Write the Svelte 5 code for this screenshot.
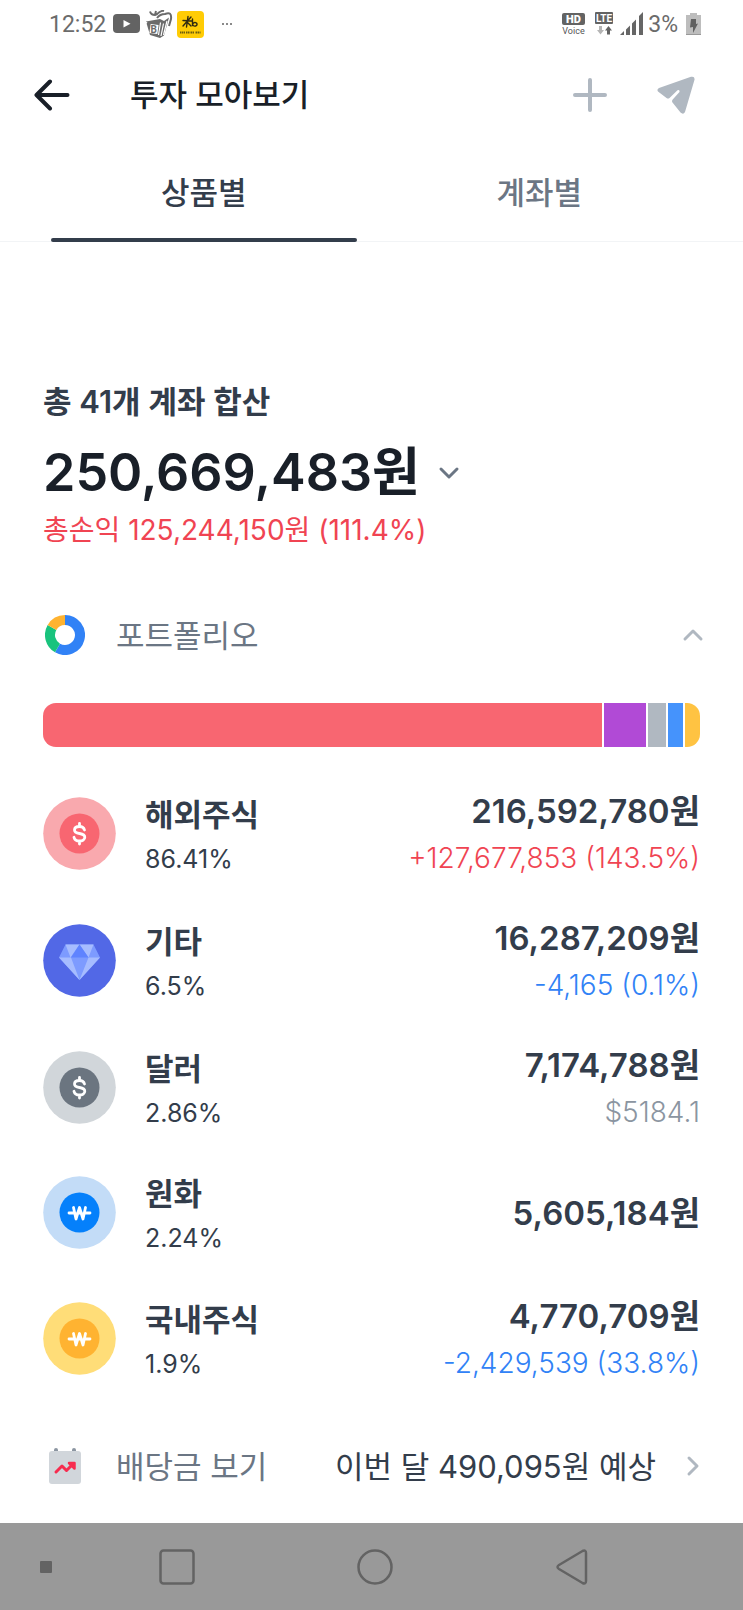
<script>
  let expanded = $state(true);
  let tab = $state('product');

  const holdings = [
    { name: '해외주식', share: 86.41, amount: '216,592,780원', note: '+127,677,853 (143.5%)', tone: 'up', icon: 'dollar', bar: '#f86671', ring: '#f9a9ae', core: '#f86671' },
    { name: '기타', share: 6.5, amount: '16,287,209원', note: '-4,165 (0.1%)', tone: 'down', icon: 'gem', bar: '#b14ad6', ring: '#5268e6', core: '#5268e6' },
    { name: '달러', share: 2.86, amount: '7,174,788원', note: '$5184.1', tone: 'muted', icon: 'dollar', bar: '#b0b8c1', ring: '#d1d6da', core: '#6b7580' },
    { name: '원화', share: 2.24, amount: '5,605,184원', note: '', tone: '', icon: 'won', bar: '#4593fc', ring: '#c3dcf7', core: '#0580fb' },
    { name: '국내주식', share: 1.9, amount: '4,770,709원', note: '-2,429,539 (33.8%)', tone: 'down', icon: 'won', bar: '#ffc342', ring: '#ffdd78', core: '#ffb331' }
  ];
</script>

<div class="screen">
  <div class="status">
    <span class="clock">12:52</span>
    <svg class="s-video" width="28" height="20" viewBox="0 0 28 20" aria-hidden="true">
      <rect width="27" height="19" rx="4" fill="#636363" />
      <path d="M10.500 6v7.500l7-3.700z" fill="#fff" />
    </svg>
    <svg class="s-box" width="28" height="28" viewBox="0 0 28 28" aria-hidden="true">
      <path d="M1 11.500 15 9l4 2 5-3.500-5 18-4 2.500-10-3z" fill="#6b6b6b" />
      <path d="M0 14.500 2 12M15.500 12.500 13.500 25M22 11l-3.500 14M18.500 13.500 16 26" stroke="#fff" stroke-width="1.200" />
      <path d="M5 1.500Q6 5 10 5l1-4M11 5q5-5 8-4M12 8q3-4 8-4 7-3 6 5l-2 7" fill="none" stroke="#6b6b6b" stroke-width="2" />
      <rect x="5" y="14.500" width="8" height="9" fill="#fff" transform="rotate(8 9 19)" />
      <text x="5.500" y="23" font-size="10" font-weight="700" fill="#6b6b6b" font-family="Roboto, sans-serif">B</text>
    </svg>
    <svg class="s-bank" width="27" height="27" viewBox="0 0 27 27" aria-hidden="true">
      <rect width="27" height="27" rx="4" fill="#ffcc05" />
      <path d="M6 9.500 15 10M11 5.500 9.500 16M14 6 6 15M9.500 10.500 14 15M15.500 8v6.500M15.500 13.500q1.500-3 4-1.500 1.500 2-1 3-2 .5-3-1.500" fill="none" stroke="#2f2a12" stroke-width="1.400" stroke-linecap="round" />
      <path d="M3 21.500h5m1 0h3.500m1 0h4m1 0h5" stroke="#6b5c0c" stroke-width="2" stroke-dasharray="1.500 .5" />
    </svg>
    <svg class="s-more" width="10" height="4" viewBox="0 0 10 4" aria-hidden="true">
      <path d="M0 2h2m2 0h2m2 0h2" stroke="#8a8a8a" stroke-width="2" />
    </svg>
    <svg class="s-hd" width="24" height="24" viewBox="0 0 24 24" aria-label="HD Voice">
      <rect x="0" y="1" width="23" height="12" rx="2" fill="#636363" />
      <text x="11.500" y="11" text-anchor="middle" font-size="11" font-weight="900" fill="#fff" font-family="Roboto, sans-serif">HD</text>
      <text x="11.500" y="22" text-anchor="middle" font-size="9" font-weight="400" fill="#555" font-family="Roboto, sans-serif">Voice</text>
    </svg>
    <svg class="s-lte" width="19" height="24" viewBox="0 0 19 24" aria-label="LTE">
      <rect x="0" y="0" width="18" height="12" rx="1" fill="#636363" />
      <text x="9" y="10" text-anchor="middle" font-size="10" font-weight="700" fill="#fff" font-family="Roboto, sans-serif">LTE</text>
      <path d="M4 14h3v4h2l-3.500 4.500L2 18h2z" fill="#b5b5b5" />
      <path d="M12 22.500v-4h-2l3.500-4.500 3.500 4.500h-2v4z" fill="#636363" />
    </svg>
    <svg class="s-signal" width="24" height="24" viewBox="0 0 24 24" aria-hidden="true">
      <path d="M0 23l4-4v4zM6 17.500l4-4V23H6zM12 11.500l4-4V23h-4zM19 4l4-4v23h-4z" fill="#666" />
    </svg>
    <span class="percent">3%</span>
    <svg class="s-battery" width="16" height="24" viewBox="0 0 16 24" aria-hidden="true">
      <path d="M4 1h7v2h4v20H0V3h4z" fill="#bdbdbd" />
      <path d="M0 22h15v1H0z" fill="#999" />
      <path d="M5 7h5v5l2-.5L7 21v-6l-3 .5z" fill="#606060" />
    </svg>
  </div>

  <header class="appbar">
    <button class="icon-btn" aria-label="뒤로">
      <svg width="36" height="32" viewBox="0 0 36 32"><path d="M33.500 16H3M16 2.500 2.500 16 16 29.500" fill="none" stroke="#191f28" stroke-width="4" stroke-linecap="round" stroke-linejoin="round" /></svg>
    </button>
    <h1>투자 모아보기</h1>
    <button class="icon-btn add" aria-label="추가">
      <svg width="36" height="36" viewBox="0 0 36 36"><path d="M18 3v30M3 18h30" stroke="#b0b8c1" stroke-width="4" stroke-linecap="round" /></svg>
    </button>
    <button class="icon-btn" aria-label="공유">
      <svg width="38" height="38" viewBox="0 0 38 38">
        <path d="M2 12 34 .8q4-.8 3.500 3L28 36q-1.600 3-4.500.5L15.500 26.500q-1-1.500.2-3L22.500 16q.4-2.300-2-1.800L12.500 22q-1.300 1-3 0L1 15.500Q-.5 13.500 2 12z" fill="#b0b8c1" />
      </svg>
    </button>
  </header>

  <nav class="tabs" aria-label="보기 방식">
    <button class:active={tab === 'product'} onclick={() => (tab = 'product')}>상품별</button>
    <button class:active={tab === 'account'} onclick={() => (tab = 'account')}>계좌별</button>
  </nav>

  <main>
    <section class="summary">
      <p class="label">총 41개 계좌 합산</p>
      <div class="total">
        <strong>250,669,483원</strong>
        <button class="icon-btn" aria-label="통화 선택">
          <svg width="22" height="14" viewBox="0 0 22 14"><path d="M3 3l8 8 8-8" fill="none" stroke="#6b7684" stroke-width="3" stroke-linecap="round" stroke-linejoin="round" /></svg>
        </button>
      </div>
      <p class="profit">총손익 125,244,150원 (111.4%)</p>
    </section>

    <button class="line-row" aria-expanded={expanded} onclick={() => (expanded = !expanded)}>
      <span class="lead">
        <svg width="40" height="40" viewBox="0 0 40 40">
          <g fill="none" stroke-width="10">
            <path d="M20 5A15 15 0 1 1 12.500 33" stroke="#3182f6" />
            <path d="M12.500 33A15 15 0 0 1 7 12.500" stroke="#19c37d" />
            <path d="M7 12.500A15 15 0 0 1 20 5" stroke="#ffb331" />
          </g>
        </svg>
      </span>
      <span class="row-title">포트폴리오</span>
      <svg class="tail" width="22" height="14" viewBox="0 0 22 14"><path d="M3 11l8-8 8 8" fill="none" stroke="#b0b8c1" stroke-width="3" stroke-linecap="round" stroke-linejoin="round" /></svg>
    </button>

    {#if expanded}
      <div class="bar">
        {#each holdings as h}
          <span style="flex-grow: {h.share}; background: {h.bar}"></span>
        {/each}
      </div>

      <ul>
        {#each holdings as h}
          <li>
            <svg class="coin" width="73" height="73" viewBox="0 0 73 73" aria-hidden="true">
              <circle cx="36.500" cy="36.500" r="36.300" fill={h.ring} />
              {#if h.icon === 'gem'}
                <path d="M22.500 20.500h28L57 33.500 36.500 56 16 33.500z" fill="#7d9bff" />
                <path d="M22.500 20.500h14l-9 13zM36.500 20.500h14l-5 13zM16 33.500h12L36.500 56zM45.500 33.500H57L36.500 56z" fill="#a6bcff" />
                <path d="M36.500 20.500l9 13h-17.500z" fill="#5f83ff" />
              {:else}
                <circle cx="36.500" cy="36.500" r="20" fill={h.core} />
                {#if h.icon === 'dollar'}
                  <path d="M41.500 33c-.6-2.300-2.500-3.500-5-3.500-3 0-5 1.400-5 3.500 0 2.300 2 3 5 3.500s5.300 1.200 5.300 3.800c0 2.200-2.300 3.700-5.300 3.700-2.800 0-4.900-1.300-5.500-3.700M36.500 26.500v3M36.500 44v3" fill="none" stroke="#fff" stroke-width="2.800" stroke-linecap="round" stroke-linejoin="round" />
                {:else}
                  <path d="M30.500 31.500l2.500 11.500 3.500-11.500L40 43l2.500-11.500M26 37h4M43 37h4M34.500 37h4" fill="none" stroke="#fff" stroke-width="2.800" stroke-linecap="round" stroke-linejoin="round" />
                {/if}
              {/if}
            </svg>
            <div class="info">
              <span class="name">{h.name}</span>
              <span class="share">{h.share}%</span>
            </div>
            <div class="value">
              <span class="amount">{h.amount}</span>
              {#if h.note}<span class="note {h.tone}">{h.note}</span>{/if}
            </div>
          </li>
        {/each}
      </ul>
    {/if}

    <button class="line-row">
      <span class="lead">
        <svg width="40" height="40" viewBox="0 0 40 40">
          <path d="M11 5v-1M29 5v-1" stroke="#8b95a1" stroke-width="4" stroke-linecap="round" />
          <rect x="4" y="5" width="32" height="33" rx="3" fill="#d1d6db" />
          <path d="M11 26l6-6 4.500 4.500 7-7" fill="none" stroke="#f72c4f" stroke-width="3" stroke-linecap="round" stroke-linejoin="round" />
          <path d="M24 17h5.500v5.500z" fill="#f72c4f" stroke="#f72c4f" stroke-width="2.500" stroke-linejoin="round" />
        </svg>
      </span>
      <span class="row-title">배당금 보기</span>
      <span class="forecast">이번 달 490,095원 예상</span>
      <svg width="14" height="22" viewBox="0 0 14 22"><path d="M3 3l8 8-8 8" fill="none" stroke="#b0b8c1" stroke-width="3" stroke-linecap="round" stroke-linejoin="round" /></svg>
    </button>
  </main>

  <nav class="system" aria-label="시스템">
    <button class="dot" aria-label="고정"><svg width="12" height="12"><rect width="12" height="12" rx="1" fill="#636363" /></svg></button>
    <button aria-label="최근 앱"><svg width="36" height="36"><rect x="1.500" y="1.500" width="33" height="33" rx="3" fill="none" stroke="#636363" stroke-width="2.500" /></svg></button>
    <button aria-label="홈"><svg width="36" height="36"><circle cx="18" cy="18" r="16.500" fill="none" stroke="#636363" stroke-width="2.500" /></svg></button>
    <button aria-label="이전"><svg width="36" height="36"><path d="M5 16 28.500 2Q32 .5 32 4v28q0 3.500-3.500 2L5 20q-3-2 0-4z" fill="none" stroke="#636363" stroke-width="2.500" /></svg></button>
  </nav>
</div>

<style>
  :global(body) { margin: 0; background: #fff; }

  .screen {
    display: flex;
    flex-direction: column;
    min-height: 100vh;
    background: #fff;
    color: #333d4b;
    font-family: Inter, "Noto Sans CJK KR", sans-serif;
  }

  button {
    border: 0;
    padding: 0;
    background: none;
    font: inherit;
    color: inherit;
    cursor: pointer;
  }
  svg { display: block; flex: none; }
  p, h1, ul { margin: 0; padding: 0; }

  .status {
    display: flex;
    align-items: center;
    height: 48px;
    padding: 0 41px 0 49px;
    font-family: Roboto, sans-serif;
    font-size: 23px;
    color: #6b6b6b;
  }
  .s-video { margin-left: 7px; }
  .s-box { margin-left: 4px; }
  .s-bank { margin-left: 4px; }
  .s-more { margin-left: 18px; }
  .s-hd { margin-left: auto; }
  .s-lte { margin-left: 9px; }
  .s-signal { margin-left: 6px; }
  .percent { margin-left: 4px; }
  .s-battery { margin-left: 8px; }

  .appbar {
    display: flex;
    align-items: center;
    height: 94px;
    padding: 0 48px 0 34px;
  }
  h1 {
    flex: 1;
    margin-left: 60px;
    padding-bottom: 5px;
    font-size: 31px;
    font-weight: 500;
    color: #191f28;
  }
  .add { margin-right: 49px; }

  .tabs {
    display: grid;
    grid-template-columns: 1fr 1fr;
    gap: 30px;
    height: 99px;
    padding: 0 51px;
    border-bottom: 1px solid #f2f4f6;
  }
  .tabs button {
    position: relative;
    padding-bottom: 2px;
    font-size: 31px;
    font-weight: 500;
    color: #6b7684;
  }
  .tabs .active { color: #333d4b; }
  .tabs .active::after {
    content: "";
    position: absolute;
    inset: auto 0 -1px;
    height: 4px;
    border-radius: 2px;
    background: #333d4b;
  }

  main { padding: 138px 43px 16px; }

  .label {
    line-height: 44px;
    font-size: 31px;
    font-weight: 600;
  }
  .total {
    display: flex;
    align-items: center;
    gap: 18px;
    margin-top: 14px;
  }
  .total strong {
    line-height: 70px;
    font-size: 52px;
    font-weight: 600;
    color: #191f28;
  }
  .profit {
    line-height: 44px;
    font-size: 28px;
    color: #f04452;
  }

  .line-row {
    display: flex;
    align-items: center;
    width: 100%;
    height: 80px;
    text-align: left;
  }
  .summary + .line-row { margin-top: 43px; }
  .lead { margin: 0 31px 0 2px; }
  .row-title, .forecast { padding-bottom: 4px; font-size: 31px; }
  .row-title { color: #6b7684; }
  .tail { margin-left: auto; margin-right: -4px; }
  .forecast {
    margin-left: auto;
    margin-right: 30px;
  }

  .bar {
    display: flex;
    gap: 2px;
    height: 44px;
    margin-top: 28px;
    border-radius: 13px;
    overflow: hidden;
  }
  .bar span { flex-basis: 0; min-width: 15px; }

  ul {
    display: grid;
    gap: 31px;
    margin: 38px 0 40px;
    list-style: none;
  }
  li {
    display: flex;
    align-items: center;
  }
  .info, .value { display: flex; flex-direction: column; }
  .info { margin-left: 29px; padding-top: 5px; }
  .value { margin-left: auto; padding-top: 2px; text-align: right; }
  .name {
    line-height: 46px;
    font-size: 31px;
    font-weight: 600;
  }
  .share { line-height: 42px; font-size: 25px; }
  .amount {
    line-height: 49px;
    font-size: 33px;
    font-weight: 600;
  }
  .note { line-height: 45px; font-size: 28px; font-weight: 300; }
  .up { color: #f04452; }
  .down { color: #3182f6; }
  .muted { color: #8b95a1; }

  .system {
    display: flex;
    height: 87px;
    margin-top: auto;
    padding-right: 72px;
    background: #999;
  }
  .system button {
    display: flex;
    flex: 1;
    align-items: center;
    justify-content: center;
  }
  .system .dot {
    flex: none;
    width: 78px;
    padding-left: 14px;
  }
</style>
